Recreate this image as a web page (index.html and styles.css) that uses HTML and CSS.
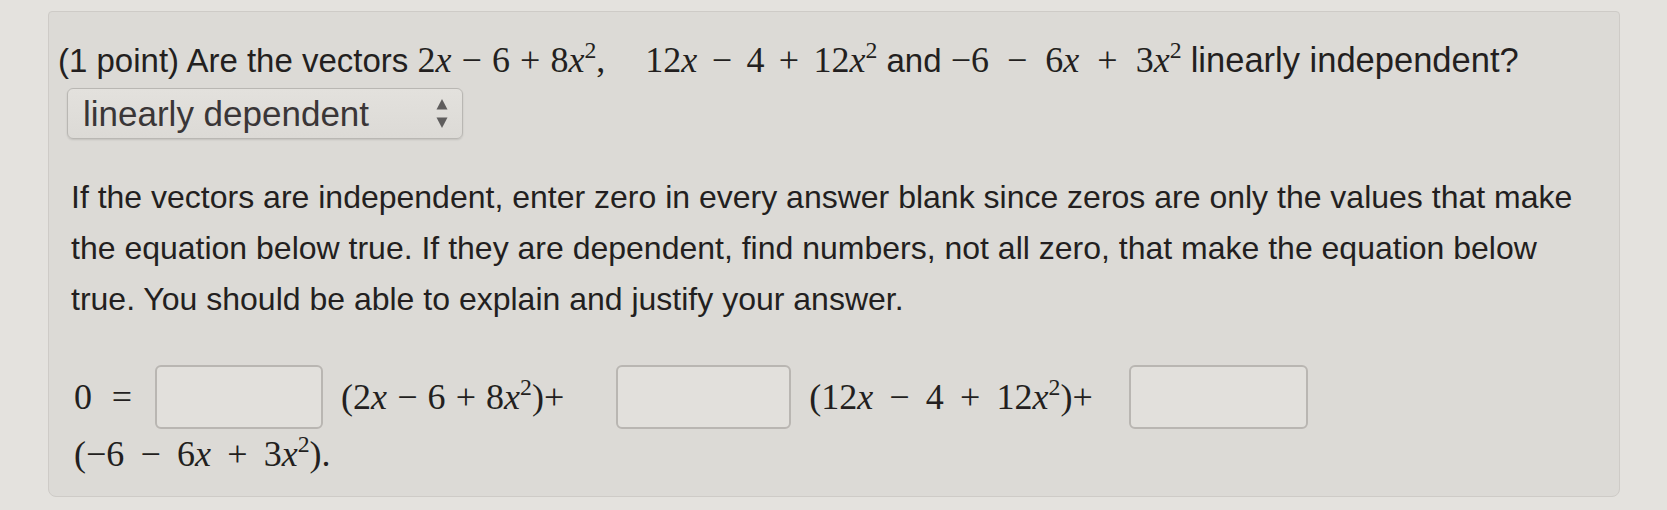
FILE: index.html
```html
<!DOCTYPE html>
<html lang="en">
<head>
<meta charset="utf-8">
<title>Linear independence problem</title>
<link rel="stylesheet" href="styles.css">
</head>
<body>
<div class="panel">
  <div class="title">(1 point) Are the vectors <span class="m m-first">2<i>x</i><span class="op">−</span>6<span class="op">+</span>8<i>x</i><sup>2</sup>,</span><span class="m m-gap">12<i>x</i><span class="op">−</span>4<span class="op">+</span>12<i>x</i><sup>2</sup></span> and <span class="m m-third">−6<span class="op">−</span>6<i>x</i><span class="op">+</span>3<i>x</i><sup>2</sup></span> <span class="title-end">linearly independent?</span></div>
  <div class="select">
    <span class="select-text">linearly dependent</span>
    <svg class="arrows" width="12" height="30" viewBox="0 0 12 30"><path d="M6 0 L11.5 10.5 L0.5 10.5 Z" fill="#5f5d5d"/><path d="M0.5 18.5 L11.5 18.5 L6 29 Z" fill="#5f5d5d"/></svg>
  </div>
  <p class="para">If the vectors are independent, enter zero in every answer blank since zeros are only the values that make the equation below true. If they are dependent, find numbers, not all zero, that make the equation below true. You should be able to explain and justify your answer.</p>
  <div class="eq-row">
    <span class="eq">0<span class="rel">=</span></span>
    <span class="box box1"></span>
    <span class="eq eq-a">(2<i>x</i><span class="op">−</span>6<span class="op">+</span>8<i>x</i><sup>2</sup>)+</span>
    <span class="box box2"></span>
    <span class="eq eq-b">(12<i>x</i><span class="op">−</span>4<span class="op">+</span>12<i>x</i><sup>2</sup>)+</span>
    <span class="box box3"></span>
  </div>
  <div class="eq eq-last">(−6<span class="op">−</span>6<i>x</i><span class="op">+</span>3<i>x</i><sup>2</sup>).</div>
</div>
</body>
</html>
```

FILE: styles.css
```css
html, body {
  margin: 0;
  padding: 0;
}
body {
  background: #e4e2de;
  width: 1667px;
  height: 510px;
  overflow: hidden;
  font-family: "Liberation Sans", Arial, sans-serif;
  color: #231f20;
}
.panel {
  box-sizing: border-box;
  margin: 11px 0 0 48px;
  width: 1572px;
  height: 486px;
  background: #dcdad6;
  border: 1px solid #cecbc7;
  border-radius: 4px 4px 8px 8px;
  padding: 28px 20px 0 18px;
}
.title {
  font-size: 33px;
  line-height: 40px;
  white-space: nowrap;
  margin-left: -9px;
}
.title-end {
  font-size: 34.5px;
}
.m {
  font-family: "Liberation Serif", "Times New Roman", serif;
  font-size: 36px;
}
.m i, .eq i {
  font-style: italic;
}
.m .op {
  margin: 0 0.4em;
}
.m-first .op {
  margin: 0 0.28em;
}
.m-third .op {
  margin: 0 0.5em;
}
.m-gap {
  margin-left: 40px;
}
sup {
  font-size: 0.66em;
  line-height: 0;
  vertical-align: 0.58em;
}
.select {
  box-sizing: border-box;
  margin-top: 7px;
  width: 396px;
  height: 51px;
  display: flex;
  align-items: center;
  justify-content: space-between;
  padding: 0 14px 0 15px;
  background: linear-gradient(#e3e1dd, #dcdad6);
  border: 1px solid #b9b7b3;
  border-radius: 6px;
  box-shadow: 0 1px 2px rgba(0,0,0,0.12);
}
.select-text {
  font-size: 35px;
  color: #3a3637;
  line-height: 1;
}
.arrows {
  display: block;
}
.para {
  margin: 33px 0 0 4px;
  width: 1525px;
  font-size: 32px;
  line-height: 51px;
}
.eq-row {
  display: flex;
  align-items: center;
  margin-top: 40px;
  margin-left: 7px;
}
.eq {
  font-family: "Liberation Serif", "Times New Roman", serif;
  font-size: 36px;
  white-space: nowrap;
}
.eq .op {
  margin: 0 0.35em;
}
.eq-a .op {
  margin: 0 0.28em;
}
.eq-b .op {
  margin: 0 0.45em;
}
.rel {
  margin-left: 0.55em;
}
.box {
  box-sizing: border-box;
  height: 64px;
  background: #e2e0dc;
  border: 2px solid #b9b6b2;
  border-radius: 6px;
}
.box1 { width: 168px; margin: 0 18px 0 23px; }
.box2 { width: 175px; margin: 0 18px 0 52px; }
.box3 { width: 179px; margin: 0 0 0 36px; }
.eq-last {
  margin: 4px 0 0 7px;
  line-height: 43px;
}
.eq-last .op {
  margin: 0 0.45em;
}
```
